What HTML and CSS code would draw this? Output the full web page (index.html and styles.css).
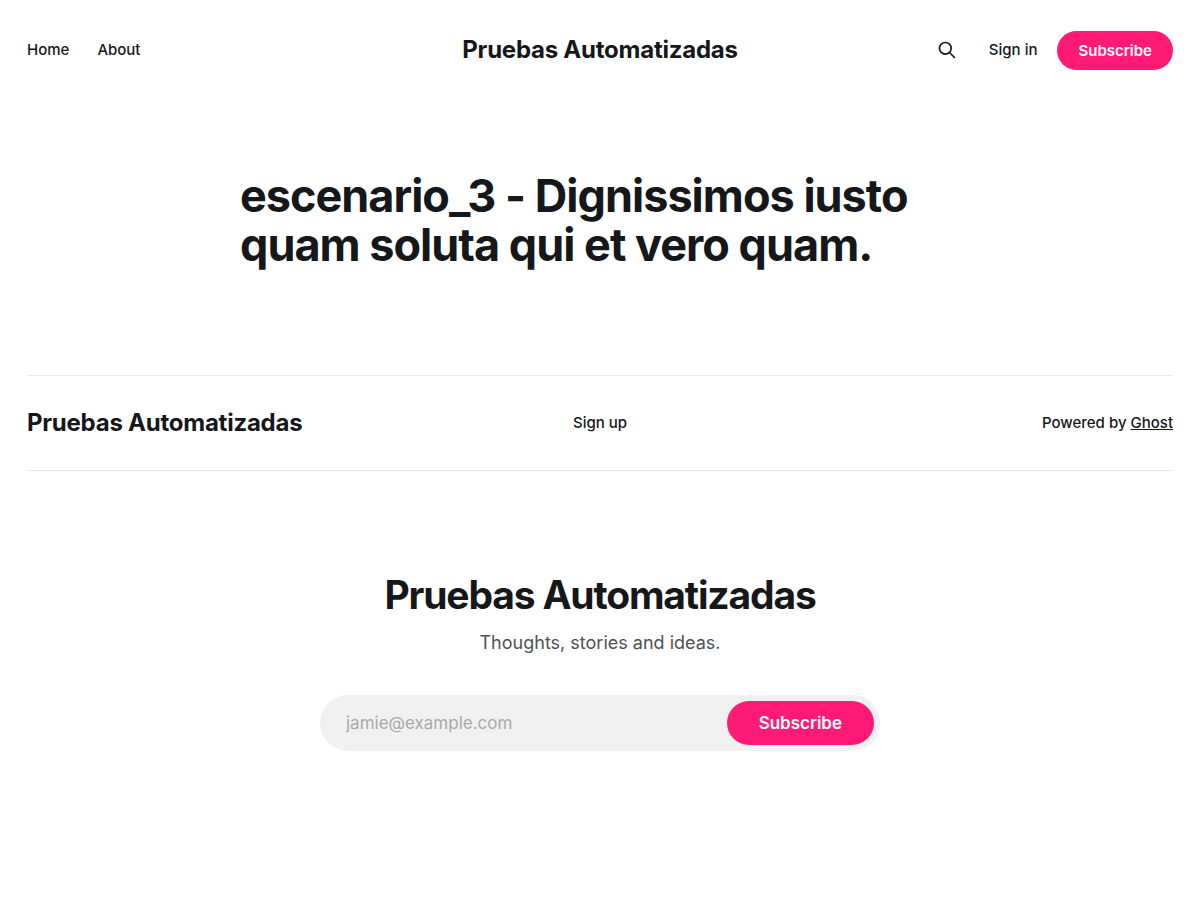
FILE: index.html
```html
<!DOCTYPE html>
<html lang="en">
<head>
<meta charset="utf-8">
<meta name="viewport" content="width=device-width, initial-scale=1">
<title>Pruebas Automatizadas</title>
<link rel="stylesheet" href="styles.css">
</head>
<body>
<header class="head">
  <nav class="nav">
    <a href="#home">Home</a>
    <a href="#about">About</a>
  </nav>
  <a class="logo" href="#home">Pruebas Automatizadas</a>
  <div class="actions">
    <button class="search" type="button" aria-label="Search">
      <svg viewBox="0 0 24 24" width="20" height="20" fill="none" stroke="currentColor" stroke-width="2" stroke-linecap="round" stroke-linejoin="round" aria-hidden="true"><path d="M21 21l-6-6m2-5a7 7 0 11-14 0 7 7 0 0114 0z"/></svg>
    </button>
    <a class="signin" href="#signin">Sign in</a>
    <a class="subscribe" href="#signup">Subscribe</a>
  </div>
</header>
<main class="article">
  <h1 class="title">escenario_3 - Dignissimos iusto quam soluta qui et vero quam.</h1>
</main>
<footer class="foot">
  <div class="bar">
    <a class="logo" href="#home">Pruebas Automatizadas</a>
    <a href="#signup">Sign up</a>
    <div class="powered">Powered by <a class="ghost" href="#ghost">Ghost</a></div>
  </div>
  <section class="signup">
    <h2 class="signup-title">Pruebas Automatizadas</h2>
    <p class="tagline">Thoughts, stories and ideas.</p>
    <form class="form">
      <input class="email" type="email" placeholder="jamie@example.com" aria-label="Email address">
      <button class="submit" type="submit">Subscribe</button>
    </form>
  </section>
</footer>
</body>
</html>
```
FILE: styles.css
```css
* {
  box-sizing: border-box;
}

body {
  margin: 0;
  background: #fff;
  color: #15171a;
  font-family: Inter, "Liberation Sans", sans-serif;
  font-size: 15px;
  font-weight: 500;
  line-height: 24px;
}

a {
  color: inherit;
  text-decoration: none;
}

.head {
  display: grid;
  grid-template-columns: 1fr auto 1fr;
  align-items: center;
  min-height: 100px;
  padding: 0 27px;
}

.nav {
  display: flex;
  gap: 28px;
}

.logo {
  font-size: 24px;
  font-weight: 700;
  letter-spacing: -0.01em;
}

.actions {
  display: flex;
  align-items: center;
  justify-content: flex-end;
}

.search {
  display: grid;
  place-items: center;
  width: 32px;
  height: 32px;
  margin-right: 26px;
  padding: 0;
  border: 0;
  background: none;
  color: inherit;
}

.signin {
  margin-right: 20px;
}

.subscribe {
  padding: 8px 21px 7px;
  border-radius: 100px;
  background: #ff1a75;
  color: #fff;
  font-weight: 600;
}

.article {
  max-width: 720px;
  margin: 0 auto;
  padding: 71px 0 106px;
}

.title {
  margin: 0;
  font-size: 45px;
  font-weight: 700;
  line-height: 49px;
  letter-spacing: -0.022em;
}

.foot {
  padding: 0 27px;
}

.bar {
  display: grid;
  grid-template-columns: 1fr auto 1fr;
  align-items: center;
  min-height: 96px;
  border-top: 1px solid #e8e8e8;
  border-bottom: 1px solid #e8e8e8;
}

.powered {
  text-align: right;
}

.ghost {
  text-decoration: underline;
}

.signup {
  max-width: 560px;
  margin: 0 auto;
  padding: 100px 0 160px;
  text-align: center;
}

.signup-title {
  margin: 0;
  font-size: 39px;
  font-weight: 700;
  line-height: 48px;
  letter-spacing: -0.03em;
}

.tagline {
  margin: 12px 0 40px;
  font-size: 18px;
  font-weight: 400;
  line-height: 24px;
  color: #505153;
}

.form {
  display: flex;
  align-items: center;
  height: 56px;
  padding: 6px;
  border-radius: 56px;
  background: #f1f1f1;
}

.email {
  flex: 1;
  min-width: 0;
  height: 44px;
  padding: 0 20px;
  border: 0;
  outline: 0;
  background: none;
  color: inherit;
  font: 400 17px/24px Inter, "Liberation Sans", sans-serif;
}

.email::placeholder {
  color: #a9a9a9;
}

.submit {
  height: 44px;
  padding: 0 32px;
  border: 0;
  border-radius: 44px;
  background: #ff1a75;
  color: #fff;
  font: 600 17px/24px Inter, "Liberation Sans", sans-serif;
}
```
